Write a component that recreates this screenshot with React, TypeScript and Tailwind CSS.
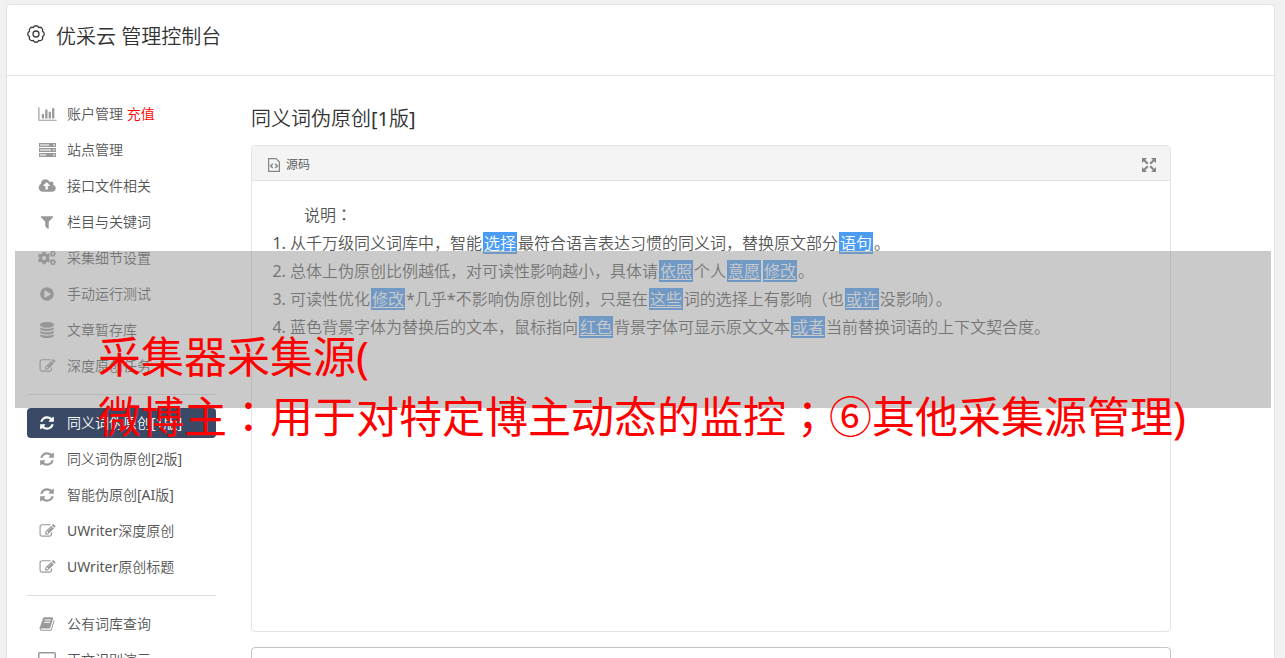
import type { ReactNode } from 'react';
import { FaCogs, FaPlayCircle } from 'react-icons/fa';

type IconProps = { box?: string; d: string; wide?: boolean };

function Glyph({ box = '0 0 1792 1792', d, wide }: IconProps) {
  return (
    <svg viewBox={box} className={wide ? 'h-4 w-[19px]' : 'h-4 w-4'} fill="currentColor" aria-hidden="true">
      <path d={d} />
    </svg>
  );
}

const BAR =
  'M640 896v512h-256v-512h256zm384-512v1024h-256v-1024h256zm1024 1152v128h-2048v-1536h128v1408h1920zm-640-896v768h-256v-768h256zm384-384v1152h-256v-1152h256z';
const CLOUD =
  'M1216 864q0-14-9-23l-352-352q-9-9-23-9t-23 9l-351 351q-10 12-10 24 0 14 9 23t23 9h224v352q0 13 9.5 22.5t22.5 9.5h192q13 0 22.5-9.5t9.5-22.5v-352h224q13 0 22.5-9.5t9.5-22.5zm640 288q0 159-112.5 271.5t-271.5 112.5h-1088q-185 0-316.5-131.5t-131.5-316.5q0-130 70-240t188-165q-2-30-2-43 0-212 150-362t362-150q156 0 285.5 87t188.5 231q71-62 166-62 106 0 181 75t75 181q0 76-41 138 130 31 213.5 135.5t83.5 238.5z';
const FILTER =
  'M1595 295q17 41-14 70l-493 493v742q0 42-39 59-13 5-25 5-27 0-45-19l-256-256q-19-19-19-45v-486l-493-493q-31-29-14-70 17-39 59-39h1280q42 0 59 39z';
const DATABASE =
  'M896 768q237 0 443-43t325-127v170q0 69-103 128t-280 93.5-385 34.5-385-34.5-280-93.5-103-128v-170q119 84 325 127t443 43zm0 768q237 0 443-43t325-127v170q0 69-103 128t-280 93.5-385 34.5-385-34.5-280-93.5-103-128v-170q119 84 325 127t443 43zm0-384q237 0 443-43t325-127v170q0 69-103 128t-280 93.5-385 34.5-385-34.5-280-93.5-103-128v-170q119 84 325 127t443 43zm0-1152q208 0 385 34.5t280 93.5 103 128v128q0 69-103 128t-280 93.5-385 34.5-385-34.5-280-93.5-103-128v-128q0-69 103-128t280-93.5 385-34.5z';
const EDIT =
  'M888 1184l116-116-152-152-116 116v56h96v96h56zm440-720q-16-16-33 1l-350 350q-17 17-1 33t33-1l350-350q17-17 1-33zm80 594v190q0 119-84.5 203.5t-203.5 84.5h-832q-119 0-203.5-84.5t-84.5-203.5v-832q0-119 84.5-203.5t203.5-84.5h832q63 0 117 25 15 7 18 23 3 17-9 29l-49 49q-14 14-32 8-23-6-45-6h-832q-66 0-113 47t-47 113v832q0 66 47 113t113 47h832q66 0 113-47t47-113v-126q0-13 9-22l64-64q15-15 35-7t20 29zm-96-738l288 288-672 672h-288v-288zm444 132l-92 92-288-288 92-92q28-28 68-28t68 28l152 152q28 28 28 68t-28 68z';
const REFRESH =
  'M1639 1056q0 5-1 7-64 268-268 434.5t-478 166.5q-146 0-282.5-55t-243.5-157l-129 129q-19 19-45 19t-45-19-19-45v-448q0-26 19-45t45-19h448q26 0 45 19t19 45-19 45l-137 137q71 66 161 102t187 36q134 0 250-65t186-179q11-17 53-117 8-23 30-23h192q13 0 22.5 9.5t9.5 22.5zm25-800v448q0 26-19 45t-45 19h-448q-26 0-45-19t-19-45 19-45l138-138q-148-137-349-137-134 0-250 65t-186 179q-11 17-53 117-8 23-30 23h-199q-13 0-22.5-9.5t-9.5-22.5v-7q65-268 270-434.5t480-166.5q146 0 284 55.5t245 156.5l130-129q19-19 45-19t45 19 19 45z';
const BOOK =
  'M1703 478q40 57 18 129l-275 906q-19 64-76.5 107.5t-122.5 43.5h-923q-77 0-148.5-53.5t-99.5-131.5q-24-67-2-127 0-4 3-27t4-37q1-8-3-21.5t-3-19.5q2-11 8-21t16.5-23.5 16.5-23.5q23-38 45-91.5t30-91.5q3-10 .5-30t-.5-28q3-11 17-28t17-23q21-36 42-92t25-90q1-9-2.5-32t.5-28q4-13 22-30.5t22-22.5q19-26 42.5-84.5t27.5-96.5q1-8-3-25.5t-2-26.5q2-8 9-18t18-23 17-21q8-12 16.5-30.5t15-35 16-36 19.5-32 26.5-23.5 36-11.5 47.5 5.5l-1 3q38-9 51-9h761q74 0 114 56t18 130l-274 906q-36 119-71.5 153.5t-128.5 34.5h-869q-27 0-38 15-11 16-1 43 24 70 144 70h923q29 0 56-15.5t35-41.5l300-987q7-22 5-57 38 15 59 43zm-1064 2q-4 13 2 22.5t20 9.5h608q13 0 25.5-9.5t16.5-22.5l21-64q4-13-2-22.5t-20-9.5h-608q-13 0-25.5 9.5t-16.5 22.5zm-83 256q-4 13 2 22.5t20 9.5h608q13 0 25.5-9.5t16.5-22.5l21-64q4-13-2-22.5t-20-9.5h-608q-13 0-25.5 9.5t-16.5 22.5z';

const ServerIcon = () => (
  <svg viewBox="0 0 17 14" className="h-[14px] w-[17px]" aria-hidden="true">
    <g fill="currentColor">
      <rect x="0" y="0" width="17" height="4" />
      <rect x="0" y="5" width="17" height="4" />
      <rect x="0" y="10" width="17" height="4" />
    </g>
    <g fill="#cfcfcf">
      <rect x="1" y="1" width="9" height="2" />
      <rect x="1" y="6" width="11" height="2" />
      <rect x="1" y="11" width="6" height="2" />
      <rect x="14" y="1" width="2" height="2" />
      <rect x="14" y="6" width="2" height="2" />
      <rect x="14" y="11" width="2" height="2" />
    </g>
  </svg>
);

const ScreenIcon = () => (
  <svg viewBox="0 0 18 16" className="h-4 w-[18px]" fill="none" stroke="currentColor" aria-hidden="true">
    <rect x="0.75" y="0.75" width="16.5" height="12.5" rx="1" strokeWidth="1.5" />
    <path d="M5 15.5h8" />
  </svg>
);

const GearIcon = () => (
  <svg viewBox="0 0 18 18" className="h-[18px] w-[18px]" fill="none" stroke="#3a3a3a" strokeWidth="1.3" aria-hidden="true">
    <path
      d="M6.320 2.530A2.900 2.900 0 0 1 11.680 2.530A2.900 2.900 0 0 1 15.470 6.320A2.900 2.900 0 0 1 15.470 11.680A2.900 2.900 0 0 1 11.680 15.470A2.900 2.900 0 0 1 6.320 15.470A2.900 2.900 0 0 1 2.530 11.680A2.900 2.900 0 0 1 2.530 6.320A2.900 2.900 0 0 1 6.320 2.530z"
      strokeLinejoin="round"
    />
    <circle cx="9" cy="9" r="3" />
  </svg>
);

const SourceIcon = () => (
  <svg viewBox="0 0 12 14" className="h-[14px] w-3" fill="none" stroke="#858585" aria-hidden="true">
    <path d="M.6.6h7.400l3.400 3.400v9.400H.6z" strokeWidth="1.2" />
    <path d="M4.800 5.700L2.600 7.900l2.200 2.200M7.200 5.700l2.200 2.200-2.200 2.200" strokeWidth="1.4" />
  </svg>
);

const ExpandIcon = () => (
  <svg viewBox="0 0 14 14" className="h-[14px] w-[14px]" fill="#848484" stroke="#848484" aria-hidden="true">
    <path stroke="none" d="M0 0h5L0 5zM14 0v5L9 0zM0 14V9l5 5zM14 14H9l5-5z" />
    <path strokeWidth="2" d="M2 2l3.700 3.700M12 2L8.300 5.700M2 12l3.700-3.700M12 12L8.300 8.300" />
  </svg>
);

const edit = <Glyph d={EDIT} wide />;
const refresh = <Glyph d={REFRESH} />;

type Item = { label: ReactNode; icon: ReactNode; active?: boolean };

const groups: Item[][] = [
  [
    { label: <>账户管理 <span className="text-[#ff0000]">充值</span></>, icon: <Glyph d={BAR} box="0 0 2048 1792" wide /> },
    { label: '站点管理', icon: <ServerIcon /> },
    { label: '接口文件相关', icon: <Glyph d={CLOUD} box="-32 0 1920 1792" wide /> },
    { label: '栏目与关键词', icon: <Glyph d={FILTER} /> },
    { label: '采集细节设置', icon: <FaCogs size={18} /> },
    { label: '手动运行测试', icon: <FaPlayCircle size={14} /> },
    { label: '文章暂存库', icon: <Glyph d={DATABASE} /> },
    { label: '深度原创任务', icon: edit },
  ],
  [
    { label: '同义词伪原创[1版]', icon: refresh, active: true },
    { label: '同义词伪原创[2版]', icon: refresh },
    { label: '智能伪原创[AI版]', icon: refresh },
    { label: 'UWriter深度原创', icon: edit },
    { label: 'UWriter原创标题', icon: edit },
  ],
  [
    { label: '公有词库查询', icon: <Glyph d={BOOK} /> },
    { label: '正文识别演示', icon: <ScreenIcon /> },
  ],
];

const Sub = ({ children }: { children: ReactNode }) => (
  <a href="#" className="mx-px bg-[#4a9cf5] px-px text-white underline underline-offset-2">{children}</a>
);

const Mid = ({ children }: { children: ReactNode }) => (
  <span className="font-['Noto_Sans_CJK_TC',sans-serif] leading-none">{children}</span>
);

export default function App() {
  return (
    <div className="relative h-screen overflow-hidden bg-[#f1f1f1] pt-1 pr-[10px] pl-[6px] font-['Noto_Sans','Noto_Sans_CJK_SC_DemiLight','Noto_Sans_CJK_SC',sans-serif] font-normal text-[#555]">
      <div className="min-h-[700px] rounded border border-[#e3e3e3] bg-white">
        <header className="flex h-[71px] items-start gap-[11px] border-b border-[#e3e3e3] px-5 pt-5">
          <GearIcon />
          <h1 className="text-xl leading-6 text-[#333]">优采云 管理控制台</h1>
        </header>
        <div className="flex pr-[103px] pl-5">
          <nav className="w-[189px] shrink-0 pt-[23px]">
            {groups.map((group, g) => (
              <ul key={g} className={g > 0 ? 'mt-[13px] flex flex-col gap-[6px] border-t border-[#dcdcdc] pt-[13px]' : 'flex flex-col gap-[6px]'}>
                {group.map((item, i) => (
                  <li key={i}>
                    <a
                      href="#"
                      className={
                        item.active
                          ? 'flex h-[30px] items-center gap-[10px] rounded bg-[#3a4a66] pl-[10px] text-sm text-white'
                          : 'flex h-[30px] items-center gap-[10px] rounded pl-[10px] text-sm'
                      }
                    >
                      <span className={item.active ? 'flex w-5 justify-center' : 'flex w-5 justify-center text-[#999]'}>{item.icon}</span>
                      <span className="whitespace-nowrap">{item.label}</span>
                    </a>
                  </li>
                ))}
              </ul>
            ))}
          </nav>
          <main className="ml-[35px] min-w-0 flex-1 pt-[29px]">
            <h2 className="text-xl leading-7 text-[#333]">同义词伪原创[1版]</h2>
            <section className="mt-3 rounded border border-[#e3e3e3]">
              <div className="flex h-[35px] items-center justify-between border-b border-[#e3e3e3] bg-[#f4f4f4] px-[14px] pt-[3px]">
                <button type="button" className="flex items-center gap-[6px] pl-[2px] text-xs">
                  <SourceIcon />
                  源码
                </button>
                <button type="button" aria-label="全屏"><ExpandIcon /></button>
              </div>
              <div className="min-h-[450px] px-5 pt-5 text-base leading-7">
                <p className="indent-8">说明<Mid>：</Mid></p>
                <ol className="list-decimal pl-[18px]">
                  <li>从千万级同义词库中，智能<Sub>选择</Sub>最符合语言表达习惯的同义词，替换原文部分<Sub>语句</Sub>。</li>
                  <li>总体上伪原创比例越低，对可读性影响越小，具体请<Sub>依照</Sub>个人<Sub>意愿</Sub><Sub>修改</Sub>。</li>
                  <li>可读性优化<Sub>修改</Sub>*几乎*不影响伪原创比例，只是在<Sub>这些</Sub>词的选择上有影响（也<Sub>或许</Sub>没影响）。</li>
                  <li>蓝色背景字体为替换后的文本，鼠标指向<Sub>红色</Sub>背景字体可显示原文文本<Sub>或者</Sub>当前替换词语的上下文契合度。</li>
                </ol>
              </div>
            </section>
            <textarea aria-label="正文" className="mt-[15px] block h-40 w-full resize-none rounded border border-[#c4c4c4] bg-white" />
          </main>
        </div>
      </div>
      <div className="absolute top-[251px] right-[14px] left-[15px] h-[157px] bg-[#969696]/50 pt-[76px] pl-[83px] font-['Noto_Sans','Noto_Sans_CJK_SC',sans-serif] text-[43px] leading-[60px] whitespace-nowrap text-[#ff0000]">
        <p>采集器采集源(</p>
        <p>微博主<Mid>：</Mid>用于对特定博主动态的监控<Mid>；</Mid>⑥其他采集源管理)</p>
      </div>
    </div>
  );
}
